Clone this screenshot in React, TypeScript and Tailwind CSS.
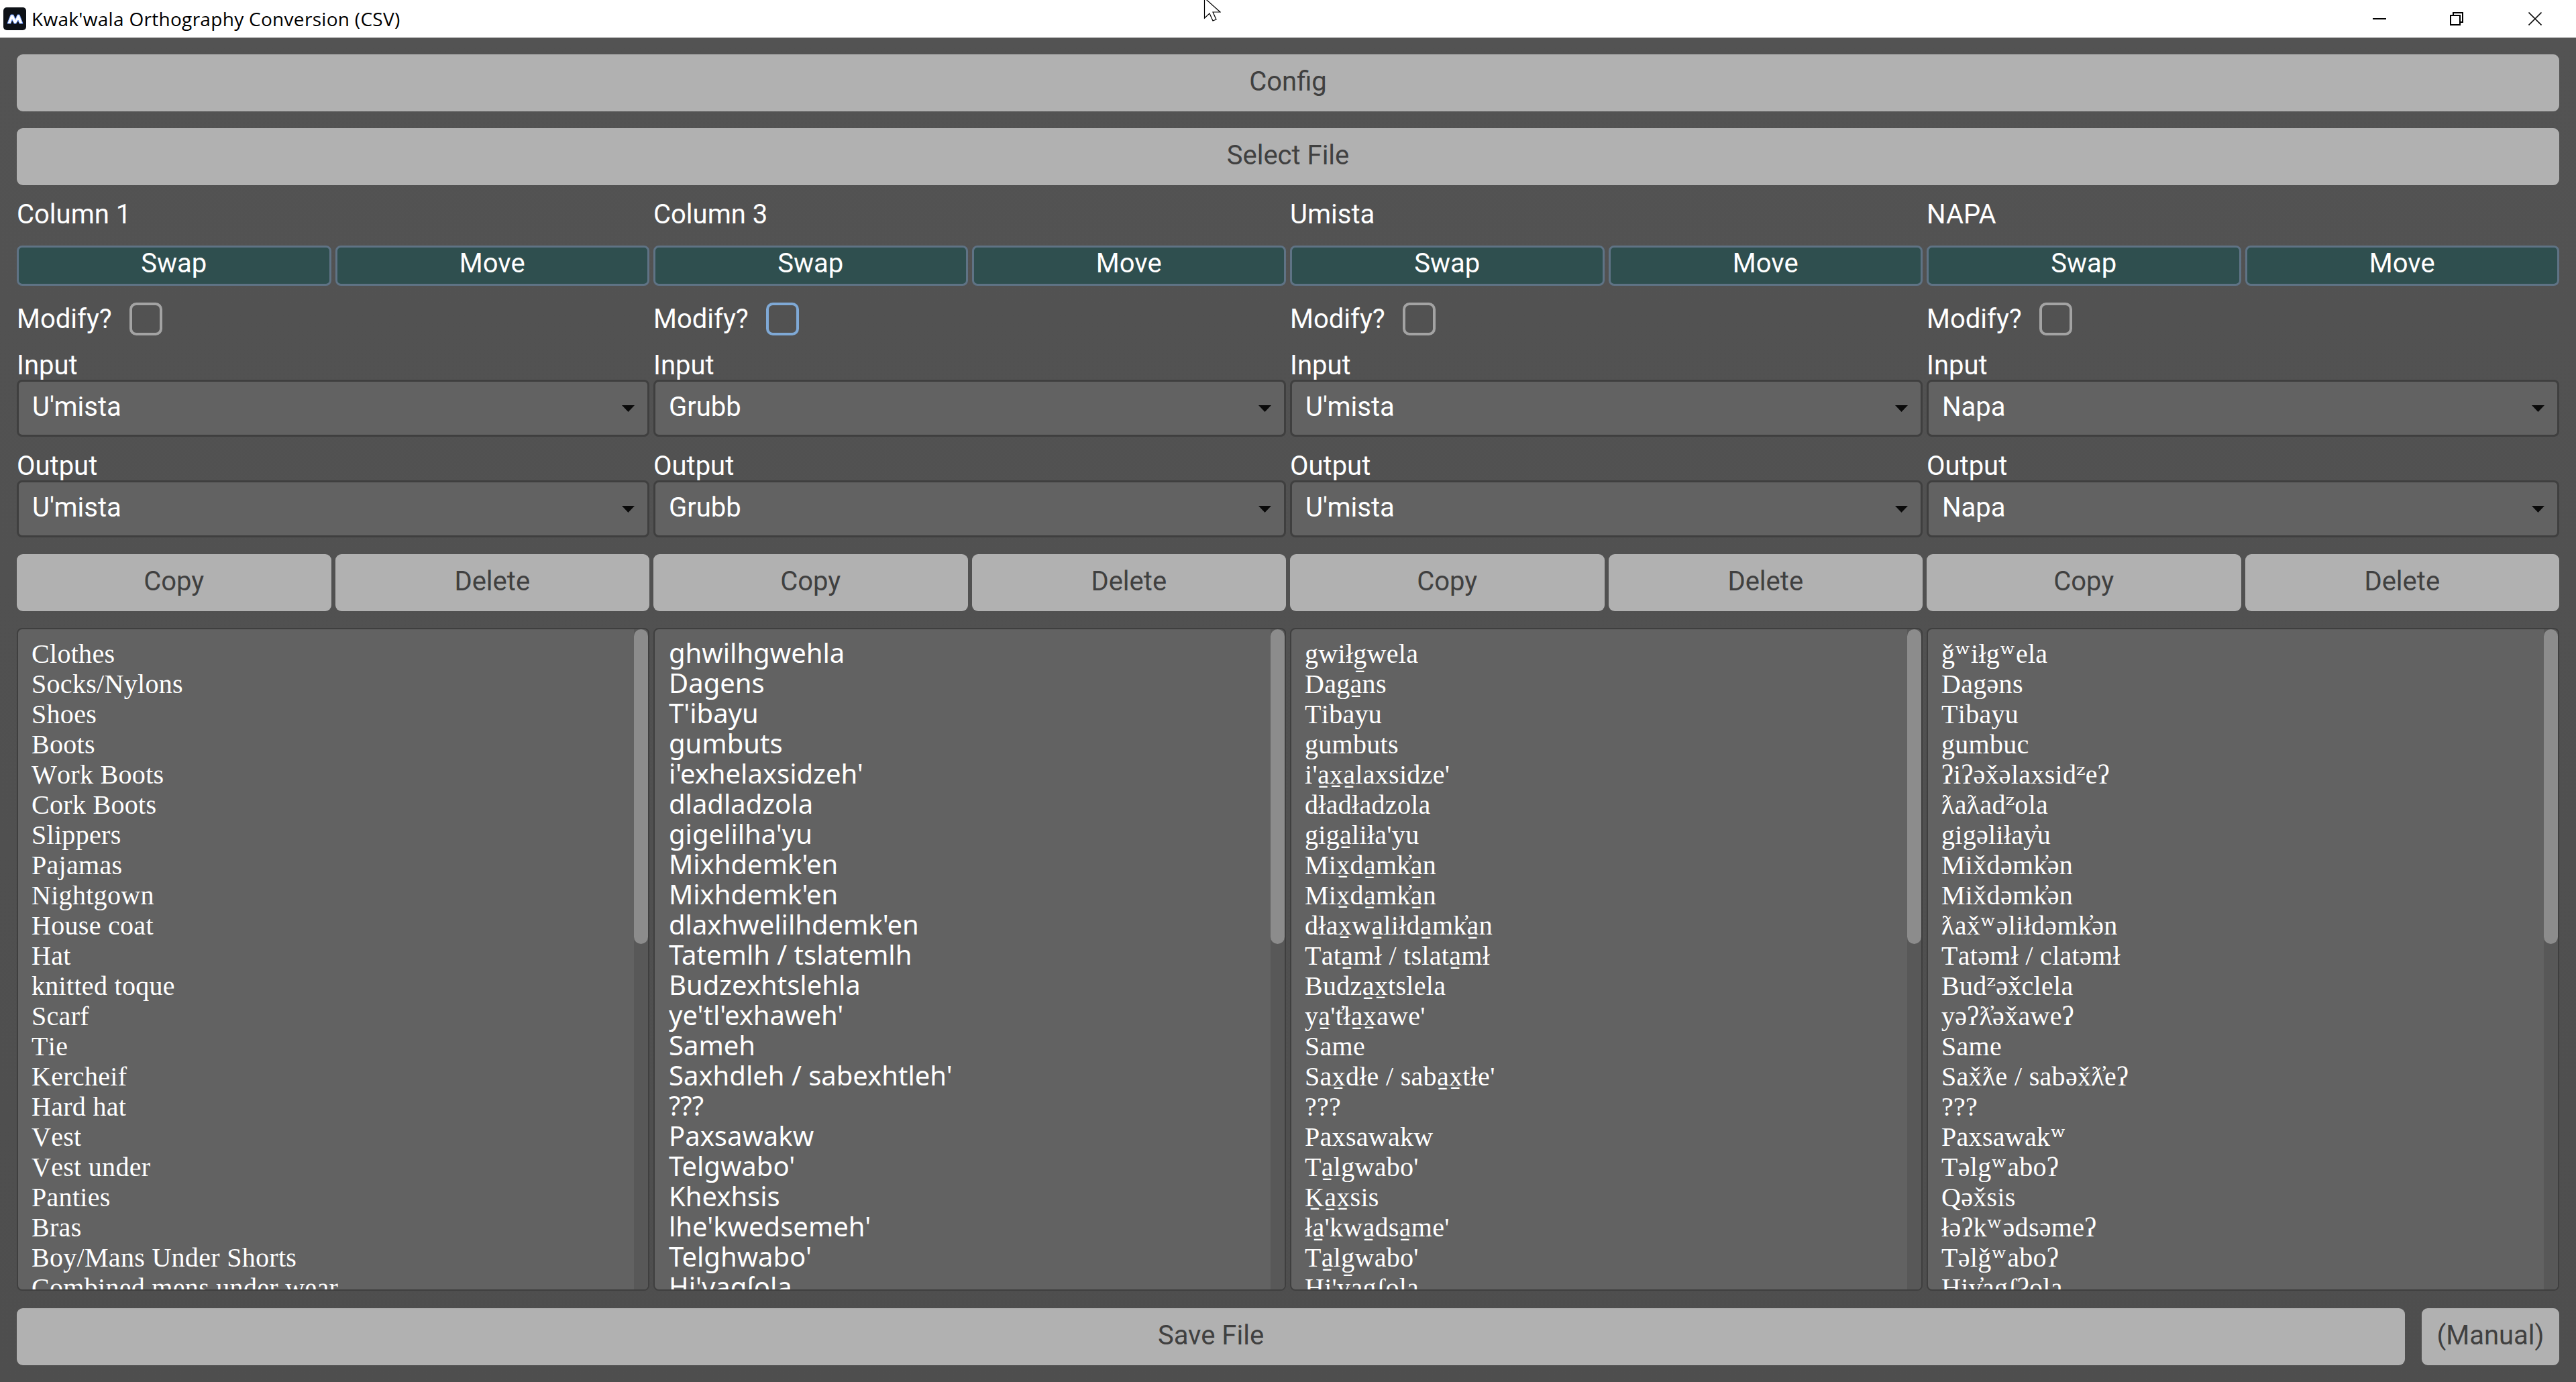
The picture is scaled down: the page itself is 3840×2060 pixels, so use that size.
const columns = [
  {
    title: "Column 1",
    input: "U'mista",
    font: "font-['Liberation_Serif',serif] [font-kerning:none] tracking-[0.3px] pl-[20px] pt-[14px]",
    active: false,
    items: [
      "Clothes", "Socks/Nylons", "Shoes", "Boots", "Work Boots", "Cork Boots", "Slippers", "Pajamas",
      "Nightgown", "House coat", "Hat", "knitted toque", "Scarf", "Tie", "Kercheif", "Hard hat", "Vest",
      "Vest under", "Panties", "Bras", "Boy/Mans Under Shorts", "Combined mens under wear",
    ],
  },
  {
    title: "Column 3",
    input: "Grubb",
    font: "font-['Noto_Sans',sans-serif] pl-[21px] pt-[12px]",
    active: true,
    items: [
      "ghwilhgwehla", "Dagens", "T'ibayu", "gumbuts", "i'exhelaxsidzeh'", "dladladzola", "gigelilha'yu",
      "Mixhdemk'en", "Mixhdemk'en", "dlaxhwelilhdemk'en", "Tatemlh / tslatemlh", "Budzexhtslehla",
      "ye'tl'exhaweh'", "Sameh", "Saxhdleh / sabexhtleh'", "???", "Paxsawakw", "Telgwabo'", "Khexhsis",
      "lhe'kwedsemeh'", "Telghwabo'", "Hi'yagʃola",
    ],
  },
  {
    title: "Umista",
    input: "U'mista",
    font: "font-['Liberation_Serif',serif] [font-kerning:none] tracking-[0.3px] pl-[20px] pt-[14px]",
    active: false,
    items: [
      "gwiłg̱wela", "Daga̱ns", "Tibayu", "gumbuts", "i'a̱x̱a̱laxsidze'", "dładładzola", "giga̱liła'yu",
      "Mix̱da̱mk̓a̱n", "Mix̱da̱mk̓a̱n", "dłax̱wa̱liłda̱mk̓a̱n", "Tata̱mł / tslata̱mł", "Budza̱x̱tslela",
      "ya̱'t̓ła̱x̱awe'", "Same", "Sax̱dłe / saba̱x̱tłe'", "???", "Paxsawakw", "Ta̱lgwabo'", "Ḵa̱x̱sis",
      "ła̱'kwa̱dsa̱me'", "Ta̱lg̱wabo'", "Hi'yagʃola",
    ],
  },
  {
    title: "NAPA",
    input: "Napa",
    font: "font-['Liberation_Serif',serif] [font-kerning:none] tracking-[0.3px] pl-[20px] pt-[14px]",
    active: false,
    items: [
      "ǧʷiłgʷela", "Dagəns", "Tibayu", "gumbuc", "ʔiʔəx̌əlaxsidᶻeʔ", "ƛaƛadᶻola", "gigəliłay̓u", "Mix̌dəmk̓ən",
      "Mix̌dəmk̓ən", "ƛax̌ʷəliłdəmk̓ən", "Tatəmł / clatəmł", "Budᶻəx̌clela", "yəʔƛ̓əx̌aweʔ", "Same",
      "Sax̌ƛe / sabəx̌ƛ̓eʔ", "???", "Paxsawakʷ", "Təlgʷaboʔ", "Qəx̌sis", "łəʔkʷədsəmeʔ", "Təlǧʷaboʔ", "Hiy̓agʃʔola",
    ],
  },
];

// superscript letters come from a fallback font in the original, they sit bigger than the serif ones
const ListText = ({ text }: any) => (
  <>
    {text.split(/([ʷᶻ])/).map((part: string, i: number) =>
      part === "ʷ" || part === "ᶻ" ? (
        <span key={i} className="font-['DejaVu_Serif',serif]">
          {part}
        </span>
      ) : (
        part
      ),
    )}
  </>
);

const GreyButton = ({ label, className = "" }: any) => (
  <button className={`h-[85px] rounded-[9px] bg-[#b1b1b1] pb-[4px] text-[#404040] ${className}`}>{label}</button>
);

const TealButton = ({ label }: any) => (
  <button className="h-[60px] flex-1 rounded-[8px] border-[3px] border-[#5f7385] bg-[#2f4f4f] pb-[6px] leading-[40px] text-white">
    {label}
  </button>
);

const Select = ({ value }: any) => (
  <div className="flex h-[85px] items-center justify-between rounded-[8px] border-[3px] border-[#3f3f3f] bg-[#626262] pl-[20px] pr-[19px] text-white">
    <span className="pb-[4px]">{value}</span>
    {/* dropdown arrow */}
    <svg width="19" height="10" viewBox="0 0 19 10">
      <polygon points="0,0 19,0 9.5,10" fill="#0a0a0a" />
    </svg>
  </div>
);

const Column = ({ col }: any) => (
  <div className="flex min-w-0 flex-col">
    <div className="flex h-[84px] items-center pt-[4px] text-white">{col.title}</div>
    <div className="mt-[6px] flex gap-[6px]">
      <TealButton label="Swap" />
      <TealButton label="Move" />
    </div>
    <div className="mt-[25px] flex h-[49px] items-center gap-[26px] text-white">
      <span>Modify?</span>
      <div
        className={
          col.active
            ? "h-[49px] w-[49px] rounded-[10px] border-[4px] border-[#7fa9d6]"
            : "h-[49px] w-[49px] rounded-[10px] border-[4px] border-[#a3a3a3]"
        }
      />
    </div>
    <div className="mt-[23px] mb-[3px] flex h-[40px] items-center pt-[4px] text-white">Input</div>
    <Select value={col.input} />
    <div className="mt-[22px] mb-[3px] flex h-[40px] items-center pt-[4px] text-white">Output</div>
    <Select value={col.input} />
    <div className="mt-[25px] flex gap-[6px]">
      <GreyButton label="Copy" className="flex-1" />
      <GreyButton label="Delete" className="flex-1" />
    </div>
    <div className="mt-[25px] flex h-[988px] overflow-hidden rounded-[8px] border-[2px] border-[#3f3f3f] bg-[#626262]">
      <div className={`min-w-0 flex-1 overflow-hidden text-white ${col.font}`}>
        {col.items.map((item: string, i: number) => (
          <div key={i} className="h-[45px] whitespace-nowrap leading-[45px]">
            <ListText text={item} />
          </div>
        ))}
      </div>
      {/* scrollbar */}
      <div className="w-[21px] shrink-0 bg-[#585858]">
        <div className="h-[469px] rounded-full bg-[#8c8c8c]" />
      </div>
    </div>
  </div>
);

export default function App() {
  return (
    <div className="relative flex h-[2060px] w-[3840px] flex-col overflow-hidden font-['Roboto',sans-serif] text-[40px]">
      {/* title bar */}
      <div className="flex h-[56px] shrink-0 items-center bg-white pl-[5px] text-black">
        <svg width="34" height="34" viewBox="0 0 34 34" className="shrink-0">
          <rect width="34" height="34" rx="5" fill="#0d1117" />
          <path
            d="M6 24 L11 11 L15 11 L18 18 L21 11 L24 11 L29 24 L24 24 L22 19 L19 24 L16 24 L13 18 L11 24 Z"
            fill="#fff"
            stroke="#6f9bff"
            strokeWidth="1"
          />
        </svg>
        <span className="ml-[8px] font-['Open_Sans',sans-serif] text-[28px] tracking-[0.3px]">
          Kwak'wala Orthography Conversion (CSV)
        </span>
        <div className="ml-auto flex items-center">
          <svg width="20" height="20" viewBox="0 0 20 20" className="mr-[95px]">
            <rect x="0" y="9" width="20" height="2" fill="#000" />
          </svg>
          <svg width="20" height="20" viewBox="0 0 20 20" className="mr-[97px]">
            <rect x="1" y="5" width="14" height="14" fill="none" stroke="#000" strokeWidth="2" />
            <path d="M5 4 V1 H19 V15 H16" fill="none" stroke="#000" strokeWidth="2" />
          </svg>
          <svg width="20" height="20" viewBox="0 0 20 20" className="mr-[51px]">
            <path d="M0.5 0.5 L19.5 19.5 M19.5 0.5 L0.5 19.5" stroke="#111" strokeWidth="1.6" />
          </svg>
        </div>
      </div>
      {/* mouse cursor over the title bar */}
      <svg width="26" height="34" viewBox="0 0 26 34" className="absolute left-[1794px] top-0">
        <path d="M1.5 -3 L25 18 H14 L19 29 L14 31 L9 20 L1.5 27 Z" fill="#fff" stroke="#000" strokeWidth="1.2" />
      </svg>

      <div className="flex flex-1 flex-col bg-linear-to-b from-[#535353] to-[#4e4e4e] px-[25px] pt-[25px]">
        <GreyButton label="Config" className="w-full shrink-0" />
        <GreyButton label="Select File" className="mt-[25px] w-full shrink-0" />
        <div className="grid grid-cols-4 gap-x-[6px]">
          {columns.map((col) => (
            <Column key={col.title} col={col} />
          ))}
        </div>
        <div className="mt-[26px] flex gap-[25px]">
          <GreyButton label="Save File" className="flex-1" />
          <GreyButton label="(Manual)" className="w-[205px]" />
        </div>
      </div>
    </div>
  );
}
